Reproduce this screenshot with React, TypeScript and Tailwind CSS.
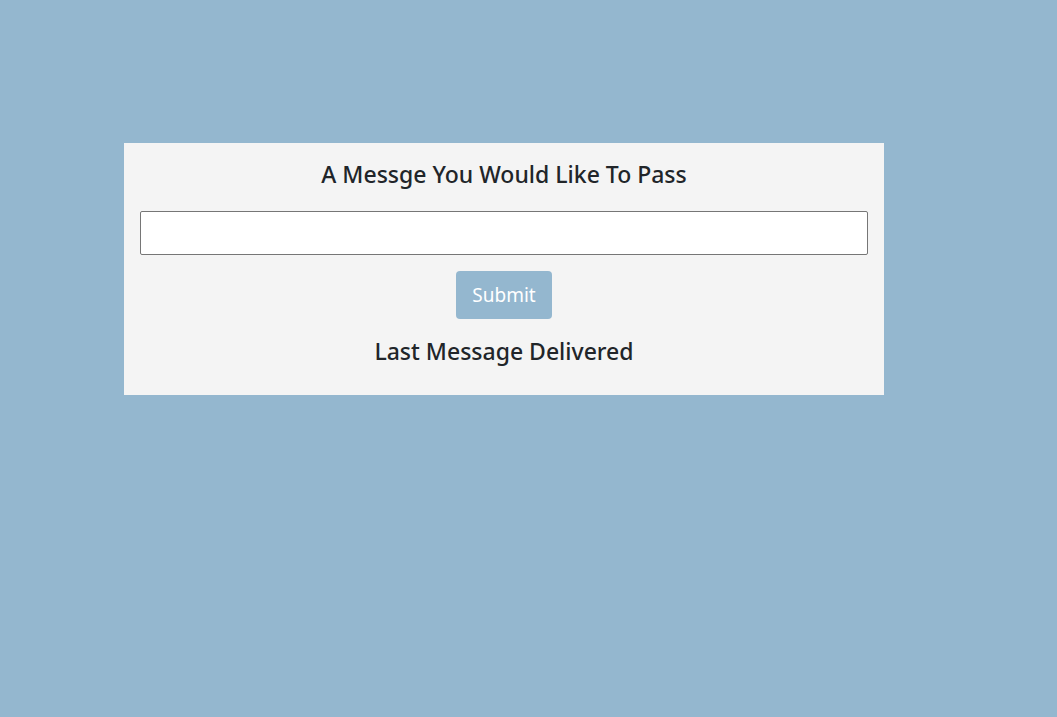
export default function App() {
  return (
    <div className="min-h-[717px] w-full bg-[#94b7cf] pt-[143px] pl-[124px] font-['Noto_Sans',sans-serif]">
      <div className="flex w-[760px] flex-col items-center bg-[#f4f4f4] px-4 pt-[15px] pb-[27px]">
        <h2 className="text-[23px] leading-[33px] font-medium text-[#212529]">A Messge You Would Like To Pass</h2>
        <input type="text" className="mt-[20px] h-[44px] w-full rounded-[2px] border border-[#767676] bg-white px-2" />
        <button className="mt-4 h-[48px] w-[96px] rounded-[4px] bg-[#94b7cf] text-[19px] text-white">Submit</button>
        <h3 className="mt-[16px] text-[23px] leading-[33px] font-medium text-[#212529]">Last Message Delivered</h3>
      </div>
    </div>
  )
}
